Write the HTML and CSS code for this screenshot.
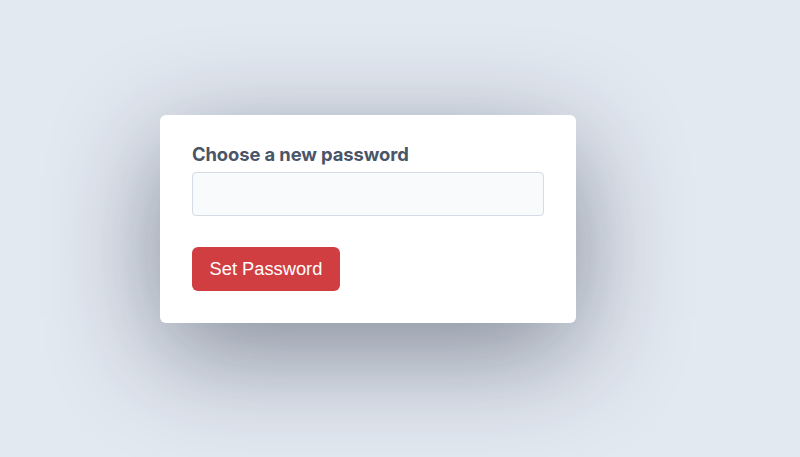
FILE: index.html
```html
<!DOCTYPE html>
<html>
<head>
<meta charset="utf-8">
<link rel="stylesheet" href="styles.css">
</head>
<body>
<main class="page">
  <form class="card">
    <label class="label" for="pw">Choose a new password</label>
    <input class="input" id="pw" type="password">
    <button class="btn" type="button">Set Password</button>
  </form>
</main>
</body>
</html>
```
FILE: styles.css
```css
html, body {
  margin: 0;
  height: 100%;
}
body {
  background: #e3e9f1;
  font-family: Inter, "Noto Sans", sans-serif;
  overflow: hidden;
}
.page {
  display: flex;
  align-items: flex-start;
  padding: 115px 0 0 160px;
}
.card {
  width: 416px;
  box-sizing: border-box;
  padding: 27px 32px 32px;
  background: #fff;
  border-radius: 6px;
  box-shadow: 0 30px 110px rgba(15, 23, 42, 0.45);
  display: flex;
  flex-direction: column;
}
.label {
  font-size: 18.4px;
  font-weight: 700;
  line-height: 24px;
  color: #4a5568;
  margin-bottom: 6px;
  letter-spacing: -0.1px;
}
.input {
  height: 44px;
  box-sizing: border-box;
  border: 1px solid #d5dbe4;
  border-radius: 4px;
  background: #f8fafc;
  margin: 0 0 31px;
}
.btn {
  align-self: flex-start;
  width: 148px;
  height: 44px;
  border: none;
  border-radius: 6px;
  background: #d13e42;
  color: #fff;
  font-family: "Liberation Sans", Arial, sans-serif;
  font-size: 18.3px;
  padding: 0;
}
```
